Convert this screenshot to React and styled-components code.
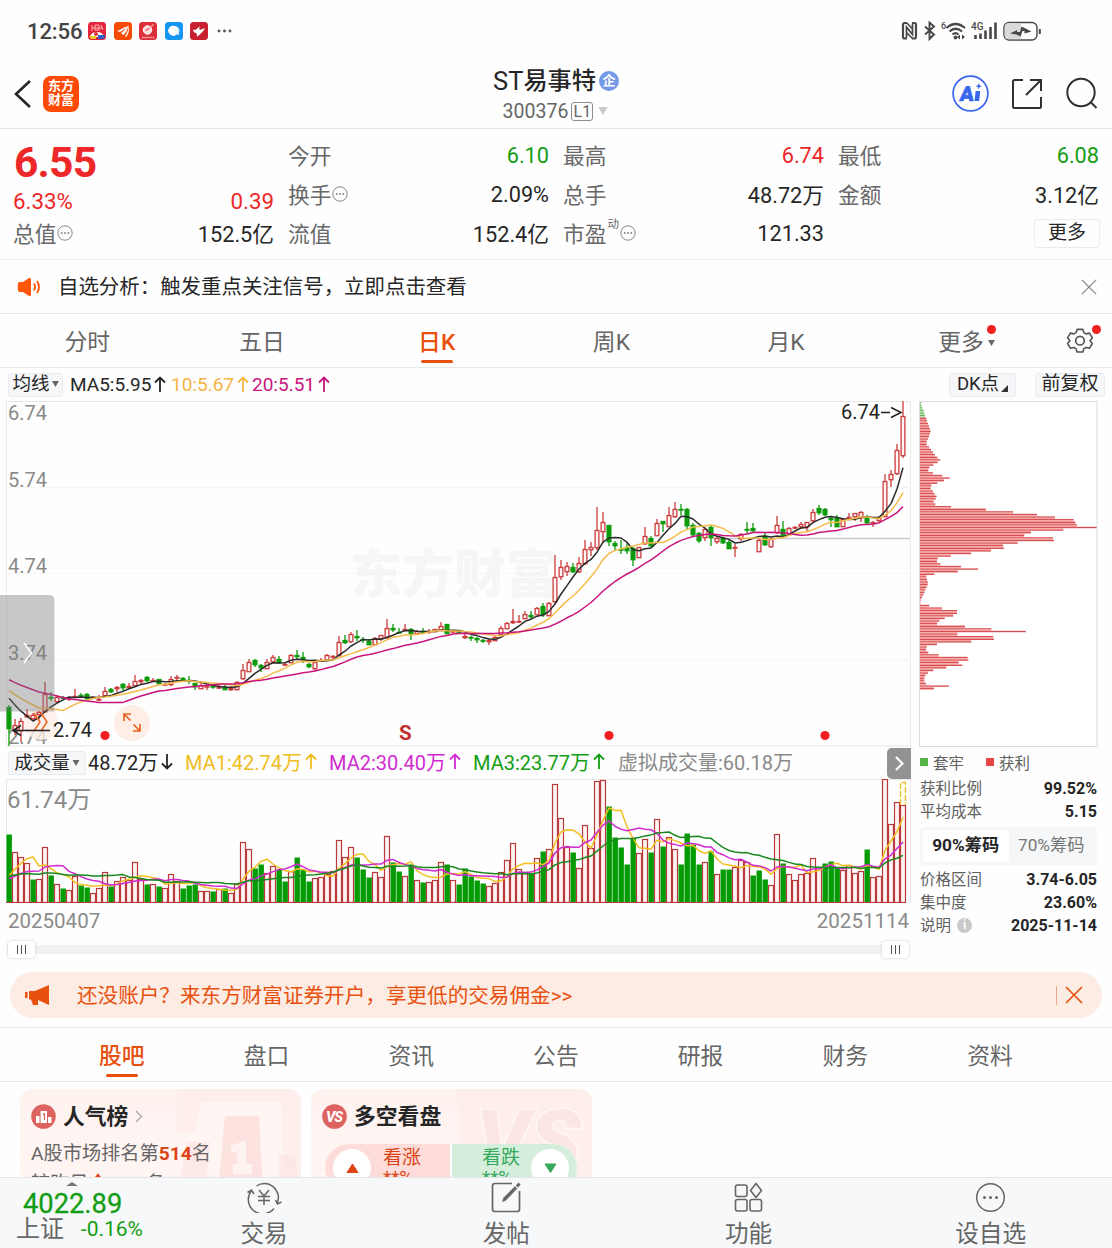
import React from 'react'
import styled, { createGlobalStyle } from 'styled-components'

const GlobalStyle = createGlobalStyle`
  * { box-sizing: border-box; }
  body {
    margin: 0;
    background: #fefefe;
    font-family: Roboto, "Noto Sans CJK SC", sans-serif;
    color: #262626;
    overflow: hidden;
  }
  svg { display: block; flex: none; }
`

const Page = styled.div`
  width: 1112px;
  height: 1248px;
  display: flex;
  flex-direction: column;
  overflow: hidden;
  white-space: nowrap;
`

/* ---------- status bar ---------- */
const StatusBar = styled.div`
  height: 60px;
  flex: none;
  display: flex;
  align-items: center;
  padding: 2px 71px 0 27px;
`
const Clock = styled.span`
  font-size: 22.2px;
  font-weight: 500;
  letter-spacing: -0.2px;
  color: #444;
  width: 61px;
`
const AppDots = styled.div`
  display: flex;
  gap: 7.5px;
  flex: 1;
`
const StatusIcons = styled.div`
  display: flex;
  align-items: center;
`

/* ---------- nav ---------- */
const NavBar = styled.div`
  height: 69px;
  flex: none;
  display: grid;
  grid-template-columns: 300px 1fr 300px;
  border-bottom: 1px solid #e6e6e6;
`
const NavLeft = styled.div`
  display: flex;
  align-items: center;
  padding: 0 0 1px 12px;
  gap: 12px;
`
const Logo = styled.div`
  width: 36px;
  height: 36px;
  border-radius: 8px;
  background: #ff4a05;
  color: #fff;
  font-size: 13px;
  font-weight: 700;
  line-height: 14.5px;
  padding-top: 3px;
  text-align: center;
`
const NavTitle = styled.div`
  display: flex;
  flex-direction: column;
  align-items: center;
  padding-top: 3px;
`
const TitleRow = styled.div`
  display: flex;
  align-items: center;
  height: 35px;
  gap: 3px;
  font-size: 24.2px;
  font-weight: 500;
  line-height: 33px;
  padding-top: 1px;
  span:first-child { font-weight: 400; font-size: 25.5px; margin-right: -3px; }
`
const Corp = styled.span`
  width: 20px;
  height: 20px;
  border-radius: 50%;
  background: #7399e8;
  color: #fff;
  font-size: 13px;
  font-weight: 700;
  line-height: 19px;
  text-align: center;
`
const CodeRow = styled.div`
  display: flex;
  align-items: center;
  height: 26px;
  font-size: 19.5px;
  color: #666;
  gap: 3px;
`
const Level = styled.span`
  border: 1px solid #8c8c8c;
  border-radius: 3px;
  width: 22px;
  height: 19px;
  line-height: 17px;
  text-align: center;
  font-size: 16px;
  margin-right: 1px;
`
const NavRight = styled.div`
  display: flex;
  align-items: center;
  justify-content: flex-end;
  padding: 0 14px 1px 0;
  gap: 22px;
`

/* ---------- quote ---------- */
const Quote = styled.div`
  height: 131px;
  flex: none;
  display: flex;
  border-bottom: 1px solid #efefef;
  padding: 0 13px;
`
const QuoteCol = styled.div`
  width: ${p => p.$w}px;
  margin-right: ${p => p.$gap || 0}px;
  padding-top: 7px;
`
const QuoteRow = styled.div`
  display: flex;
  justify-content: space-between;
  align-items: center;
  height: 39px;
  font-size: 21.7px;
  color: ${p => p.$color || '#262626'};
`
const Price = styled.div`
  height: 50px;
  line-height: 53px;
  padding-left: 1px;
  font-size: 42.5px;
  font-weight: 700;
  letter-spacing: -0.8px;
  color: #ee2728;
`
const PriceRow = styled(QuoteRow)`
  height: ${p => p.$h}px;
  font-size: ${p => p.$size || 21.7}px;
`
const Label = styled.span`
  display: flex;
  align-items: center;
  color: #686868;
  gap: 1px;
  padding-bottom: 3px;
  > svg { margin-top: 1px; }
`
const Val = styled.span`
  color: ${p => p.$color || '#262626'};
  padding-bottom: ${p => (p.$unit ? 3 : 0)}px;
`
const Sup = styled.sup`
  font-size: 11.5px;
  line-height: 14px;
  align-self: flex-start;
`
const MoreButton = styled.span`
  width: 66px;
  height: 29px;
  border: 1px solid #ececec;
  border-radius: 3px;
  line-height: 26px;
  text-align: center;
  font-size: 19px;
  margin: -1px -1px 0 auto;
`

/* ---------- notice ---------- */
const Notice = styled.div`
  height: 54px;
  flex: none;
  display: flex;
  align-items: center;
  padding: 0 15px 0 17px;
  border-bottom: 1px solid #e8e8e8;
  font-size: 20.45px;
`
const NoticeText = styled.span`
  flex: 1;
  padding: 0 0 4px 16px;
`

/* ---------- tabs ---------- */
const Tabs = styled.div`
  height: 54px;
  flex: none;
  display: flex;
  border-bottom: 1px solid #e8e8e8;
`
const SectionTabs = styled(Tabs)`
  height: 55px;
  border-top: 1px solid #e8e8e8;
  padding-left: 49.5px;
`
const Tab = styled.div`
  width: ${p => p.$w}px;
  display: flex;
  flex-direction: column;
  align-items: center;
  font-size: 22.8px;
  line-height: 46px;
  padding-top: 6px;
  color: ${p => (p.$on ? '#e8500e' : '#666')};
  font-weight: ${p => (p.$on ? 500 : 400)};
  &::after {
    content: '';
    width: 32px;
    height: 3px;
    border-radius: 2px;
    margin-top: -6px;
    background: ${p => (p.$on ? '#e8500e' : 'transparent')};
  }
`
const TabMore = styled.span`
  display: flex;
  align-items: center;
  gap: 4px;
  position: relative;
`
const Badge = styled.i`
  position: absolute;
  width: 9px;
  height: 9px;
  border-radius: 50%;
  background: #f0201f;
  right: ${p => p.$right}px;
  top: ${p => p.$top}px;
`
const GearBox = styled.div`
  position: relative;
  padding: 13px 8px 0 7px;
`

/* ---------- chart area ---------- */
const Indicators = styled.div`
  height: 33px;
  flex: none;
  display: flex;
  align-items: center;
  padding: 0 7px 0 8px;
  font-size: 19px;
`
const Chip = styled.span`
  display: flex;
  align-items: center;
  justify-content: center;
  gap: 2px;
  width: ${p => p.$w}px;
  height: 24px;
  border: 1px solid #e9ebee;
  border-radius: 3px;
  background: #f6f7f9;
  color: #262626;
  font-size: ${p => p.$size || 18.5}px;
  line-height: 20px;
  padding-bottom: 1px;
  margin-left: ${p => p.$ml || 0}px;
`
const Ma = styled.span`
  display: flex;
  align-items: center;
  gap: 3px;
  color: ${p => p.$color};
  margin-left: ${p => p.$ml || 0}px;
  padding-bottom: ${p => p.$pb || 0}px;
  width: ${p => p.$w}px;
`
const Spacer = styled.div`
  flex: 1;
`
const ChartArea = styled.div`
  flex: none;
  height: 571px;
  display: flex;
`
const ChartLeft = styled.div`
  width: 912px;
`
const VolumeHead = styled.div`
  height: 32px;
  display: flex;
  align-items: center;
  padding-left: 8px;
  font-size: 20px;
`
const NextButton = styled.div`
  margin: 0 1px 0 auto;
  width: 24px;
  height: 31px;
  border-radius: 5px 0 0 5px;
  background: #929292;
  display: flex;
  align-items: center;
  justify-content: center;
`
const Dates = styled.div`
  height: 36px;
  display: flex;
  justify-content: space-between;
  padding: 0 3px 0 8px;
  font-size: 20.5px;
  line-height: 36px;
  color: #8a8a8a;
`
const Range = styled.div`
  height: 20px;
  margin: 0 3px 0 7px;
  padding: 0 0 0 1px;
  display: flex;
  align-items: center;
  justify-content: space-between;
  background: linear-gradient(#f1f1f3, #f1f1f3) center / 100% 9px no-repeat;
`
const Handle = styled.div`
  width: 27px;
  height: 17px;
  border-radius: 4px;
  background: #fff;
  box-shadow: 0 0 3px #c8c8c8;
  display: flex;
  align-items: center;
  justify-content: center;
  gap: 3px;
  i {
    width: 1px;
    height: 9px;
    background: #555;
  }
`

/* ---------- chips panel ---------- */
const ChipPanel = styled.div`
  width: 185px;
  padding-left: 7px;
`
const Legend = styled.div`
  display: flex;
  align-items: center;
  height: 30px;
  font-size: 15.5px;
  color: #606060;
`
const Square = styled.i`
  width: 8px;
  height: 8px;
  background: ${p => p.$color};
  margin: 0 5px 0 ${p => p.$ml || 1}px;
`
const Stat = styled.div`
  display: flex;
  align-items: center;
  justify-content: space-between;
  height: 23px;
  padding-left: 1px;
  font-size: 15.5px;
  color: #606060;
  span:first-child { padding-bottom: 3px; }
  b {
    font-size: 16px;
    color: #262626;
  }
`
const Segmented = styled.div`
  display: flex;
  height: 38px;
  margin: 4px 0 3px 1px;
  padding: 3px;
  border-radius: 3px;
  background: #f6f7f9;
`
const Segment = styled.span`
  flex: 1;
  border-radius: 3px;
  text-align: center;
  line-height: 30px;
  font-size: 17.3px;
  background: ${p => (p.$on ? '#fff' : 'transparent')};
  font-weight: ${p => (p.$on ? 700 : 400)};
  color: ${p => (p.$on ? '#262626' : '#777')};
`
const Info = styled.span`
  width: 15px;
  height: 15px;
  border-radius: 50%;
  background: #c9c9c9;
  color: #fff;
  font-size: 12px;
  font-weight: 700;
  line-height: 15px;
  text-align: center;
  margin: 0 auto 0 6px;
`

/* ---------- banner ---------- */
const Banner = styled.div`
  flex: none;
  height: 46px;
  margin: 0 10px 9px;
  border-radius: 23px;
  background: #fcece3;
  display: flex;
  align-items: center;
  padding: 0 19px 0 15px;
  color: #e8500e;
  font-size: 20.6px;
`
const BannerText = styled.span`
  flex: 1;
  padding: 0 0 3px 26px;
`
const Divider = styled.i`
  width: 1px;
  height: 19px;
  background: #eaa98c;
  margin-right: 8px;
`

/* ---------- cards ---------- */
const Cards = styled.div`
  flex: none;
  height: 95px;
  overflow: hidden;
  display: flex;
  gap: 10px;
  padding: 7px 0 0 20px;
`
const Card = styled.div`
  position: relative;
  width: 281px;
  height: 140px;
  border-radius: 13px;
  overflow: hidden;
  background: linear-gradient(#fef2ef, #fff8f6);
  padding: 8px 11px;
`
const CardArt = styled.svg`
  position: absolute;
  right: 0;
  top: 0;
`
const CardTitle = styled.div`
  position: relative;
  display: flex;
  align-items: center;
  gap: 7px;
  height: 38px;
  font-size: 21.8px;
  font-weight: 700;
  span { padding-bottom: 3px; }
`
const CardText = styled.div`
  position: relative;
  font-size: 19.2px;
  line-height: 30px;
  padding-top: 4px;
  color: #666;
  b { color: #dc4415; }
`
const Vote = styled.div`
  position: relative;
  display: flex;
  width: 252px;
  height: 48px;
  margin: 9px 0 0 3px;
  border-radius: 24px;
  overflow: hidden;
  background: #fff;
  gap: 2px;
`
const VoteSide = styled.div`
  flex: 1 1 0;
  min-width: 0;
  display: flex;
  flex-direction: ${p => (p.$down ? 'row-reverse' : 'row')};
  align-items: center;
  padding: 0 8px;
  background: ${p => (p.$down ? '#d5eedc' : '#fddcd9')};
  color: ${p => (p.$down ? '#35a95b' : '#dc4415')};
`
const VoteText = styled.div`
  flex: 1;
  align-self: flex-start;
  font-size: 19px;
  line-height: 20px;
  padding: 4px 0 0 ${p => (p.$down ? 22 : 12)}px;
`
const VoteKnob = styled.span`
  flex: none;
  width: 38px;
  height: 38px;
  border-radius: 50%;
  background: #fff;
  display: flex;
  align-items: center;
  justify-content: center;
`

/* ---------- bottom bar ---------- */
const BottomBar = styled.div`
  flex: none;
  height: 71px;
  display: flex;
  border-top: 1px solid #e3e5e8;
  background: #f6f8fa;
`
const IndexBox = styled.div`
  width: 143px;
  padding: 4px 0 0 16px;
  color: #149d14;
  > svg { margin-left: 50px; }
`
const IndexValue = styled.div`
  font-size: 27.3px;
  line-height: 30px;
  padding: 3px 0 0 7px;
  -webkit-text-stroke: 0.3px #149d14;
`
const IndexRow = styled.div`
  display: flex;
  align-items: center;
  justify-content: space-between;
  font-size: 21px;
  line-height: 24px;
  margin-top: -2px;
  span { color: #666; font-size: 24px; }
`
const Action = styled.div`
  width: 242.2px;
  display: flex;
  flex-direction: column;
  align-items: center;
  font-size: 23.6px;
  line-height: 30px;
  color: #666;
  padding-top: 4px;
  gap: 6px;
`

/* ---------- data ---------- */
// per day: up/down, high, body top, body bottom, low, top of the volume bar (chart pixels)
const DAYS = `
G 705 707 729 746 834|R 719 725 731 735 852|R 718 721 731 742 857|R 709 715 717 718 863|G 713 715 719 720 879
R 711 712 715 719 879|R 682 694 712 713 847|G 692 697 698 701 875|R 695 697 702 703 884|G 696 697 698 699 888
R 697 698 699 701 890|R 689 696 697 697 876|G 693 695 696 697 885|G 693 694 699 699 887|R 696 697 698 699 893
R 695 699 700 701 888|R 687 691 696 696 872|G 688 689 692 693 886|R 686 687 689 692 881|R 683 684 688 691 877
R 683 686 688 689 880|R 675 681 686 686 862|R 679 680 682 684 879|G 676 677 681 682 884|R 678 680 681 682 884
G 679 679 684 684 886|R 683 684 685 686 888|R 676 679 685 686 874|R 675 677 678 681 881|G 677 678 681 681 888
G 676 680 681 684 885|G 683 683 687 690 884|R 683 685 689 689 891|R 685 686 687 690 891|G 685 686 687 689 891
R 685 687 688 689 889|G 685 687 690 690 888|R 686 688 690 691 893|R 681 682 690 690 884|R 664 670 679 680 842
R 659 662 672 672 849|G 659 660 665 667 868|G 664 665 668 672 864|R 659 662 669 669 873|R 655 657 662 663 866
G 656 659 663 664 869|G 663 664 665 666 881|R 654 655 663 663 871|G 650 655 657 659 857|G 652 657 660 663 869
G 663 664 667 668 881|R 662 662 669 670 878|R 658 660 661 662 877|R 654 655 660 661 874|R 655 656 657 659 871
R 636 642 656 656 840|R 635 640 643 644 857|R 632 634 642 643 847|G 630 636 638 641 857|G 637 639 640 643 869
G 639 641 645 645 877|R 637 638 645 645 872|R 635 635 639 641 877|R 619 628 638 639 836|G 624 628 630 632 862
G 628 632 632 633 871|R 624 629 630 631 876|G 628 629 634 640 864|R 630 631 634 635 880|G 628 631 632 633 882
R 629 631 632 634 882|R 629 629 632 632 880|R 622 626 631 631 862|G 624 624 634 634 864|R 630 631 632 633 880
G 630 631 633 634 884|G 633 636 638 639 868|G 636 637 638 641 876|G 637 638 640 643 880|G 639 640 641 643 883
R 639 640 642 645 886|R 635 637 641 641 883|R 626 628 635 635 872|R 622 623 629 629 860|R 609 621 623 624 843
R 615 621 622 623 869|R 611 614 619 619 872|G 611 615 617 619 873|R 607 608 615 615 858|G 603 606 615 617 851
R 602 603 616 616 849|R 555 577 602 603 784|R 560 567 577 580 818|R 562 566 572 576 847|G 563 567 572 573 852
R 557 563 572 573 868|R 540 549 564 565 825|R 542 547 550 556 848|R 507 530 548 550 781|R 512 522 532 543 780
G 525 525 542 546 806|G 541 543 546 551 837|G 540 549 550 554 847|G 543 547 551 554 864|G 547 548 560 566 838
R 547 547 558 558 853|R 527 536 544 545 839|G 536 538 546 547 852|R 519 523 536 536 819|G 521 521 524 532 846
R 507 515 527 527 837|R 502 509 517 518 849|G 504 509 510 515 864|G 508 509 526 529 833|G 523 525 535 537 844
G 532 533 541 543 864|R 528 529 538 541 862|G 526 527 538 546 851|R 536 538 542 544 874|G 537 538 543 544 869
G 540 542 549 549 869|R 544 547 548 557 867|R 533 534 539 541 860|R 522 529 530 534 862|G 523 528 531 533 875
G 539 540 552 552 870|G 533 536 545 546 879|R 538 539 547 548 885|R 516 525 533 534 834|G 521 529 536 537 863
R 527 528 534 535 874|R 526 527 528 529 880|R 522 524 527 529 874|R 522 522 527 531 873|R 509 512 521 522 858
R 505 508 513 515 867|G 508 509 515 516 863|G 516 518 520 527 861|G 515 518 527 527 867|R 518 519 527 527 870
R 513 517 518 520 865|R 513 513 517 521 873|R 511 512 518 522 871|G 515 518 523 525 849|R 521 522 523 527 877
R 516 518 521 522 876|R 474 481 517 517 779|R 470 474 480 487 824|R 444 450 474 475 802|R 400 416 456 458 805
`.trim().split(/[|\n]/).map(s => {
  const [kind, ...n] = s.split(' ')
  const [high, top, bottom, low, vol] = n.map(Number)
  return { up: kind === 'R', high, top, bottom, low, vol }
})

// price candles whose colour differs from the volume bar below them
const FLIPPED = [4, 19, 46, 56, 76, 123, 125, 135]
DAYS.forEach((d, i) => { d.candleUp = FLIPPED.includes(i) ? !d.up : d.up })

// levels before the first visible day, so the averages start at the left edge
const repeat = (n, v) => Array(n).fill(v)
const BEFORE_PRICE = [...repeat(10, 669), ...repeat(5, 683), ...repeat(4, 690.5)]
const BEFORE_VOL = [...repeat(10, 873), ...repeat(5, 882), ...repeat(4, 886.5)]

const dayX = i => 9 + i * 6

function average(before, values, n) {
  const all = [...before, ...values]
  return values
    .map((_, i) => {
      const end = i + before.length + 1
      const part = all.slice(end - n, end)
      return `${dayX(i)},${(part.reduce((a, b) => a + b, 0) / n).toFixed(1)}`
    })
    .join(' ')
}

const CLOSES = DAYS.map(d => (d.candleUp ? d.top : d.bottom))
const VOLS = DAYS.map(d => d.vol)

const CHIPS = [
  3, 4, 7, 11, 13, 15, 19, 21, 24, 27, 30, 32, 30, 27, 24, 20, 20, 27, 33, 39, 45, 52, 61, 53, 40, 28, 25, 39, 67, 89,
  72, 52, 34, 32, 39, 44, 50, 47, 41, 46, 93, 198, 279, 351, 405, 461, 466, 471, 530, 430, 333, 313, 399, 402, 293,
  249, 252, 213, 153, 92, 53, 51, 61, 123, 174, 113, 43, 19, 21, 24, 23, 20, 16, 13, 10, 6, 2, 1, 28, 66, 111, 111,
  100, 74, 58, 51, 135, 214, 318, 112, 220, 222, 154, 51, 20, 18, 25, 56, 143, 145, 116, 127, 79, 40, 24, 16, 13, 13,
  18, 86, 42,
].map(v => v / 3)

/* ---------- small drawings ---------- */
const Arrow = ({ down }) => (
  <svg width="12" height="17" viewBox="0 0 12 17" fill="none" stroke="currentColor" strokeWidth="1.8">
    <path d={down ? 'M6 1v14M1 10.500l5 5 5-5' : 'M6 16V2M1 6.500l5-5 5 5'} />
  </svg>
)
const Caret = ({ w = 8, h = 7, color = '#666' }) => (
  <svg width={w} height={h} viewBox="0 0 8 7"><path d="M0 0h8L4 7z" fill={color} /></svg>
)
const Dots = () => (
  <svg width="16" height="16" viewBox="0 0 16 16" fill="#888">
    <circle cx="8" cy="8" r="7.200" fill="none" stroke="#888" />
    <circle cx="4.700" cy="8" r="1" /><circle cx="8" cy="8" r="1" /><circle cx="11.300" cy="8" r="1" />
  </svg>
)
const Cross = ({ size, color, width }) => (
  <svg width={size} height={size} viewBox="0 0 18 18" stroke={color} strokeWidth={width}>
    <path d="M1 1l16 16M17 1L1 17" />
  </svg>
)
const Triangle = ({ down, color }) => (
  <svg width="13" height="10" viewBox="0 0 13 10">
    <path d={down ? 'M1 1h11L6.500 9.500z' : 'M1 9.500h11L6.500 1z'} fill={color} stroke={color} strokeLinejoin="round" />
  </svg>
)

function StatusApps() {
  return (
    <AppDots>
      <svg width="18" height="18" viewBox="0 0 18 18">
        <rect width="18" height="18" rx="3.5" fill="#e3263b" />
        <path d="M4 3v6M7 3h4v5H7zM13 3l2 5M4 6h11" stroke="#ffb3b0" fill="none" />
        <path d="M2 15c1-4 4-5 7-5s6 1 7 5z" fill="#fff" />
        <circle cx="8" cy="12" r="2" fill="#d33" />
        <path d="M1 14h7v3H3z" fill="#f6c62c" /><path d="M10 13h7v2l-2 2h-5z" fill="#2f62c9" />
      </svg>
      <svg width="18" height="18" viewBox="0 0 18 18">
        <rect width="18" height="18" rx="3.5" fill="#f64a06" />
        <path d="M3 9c4-1 6-4 12-5-3 1-6 5-9 6zM7 11c3-1 4-5 8-7-2 3-3 8-6 9zM11 14c2-2 3-6 4-10 0 4 0 8-3 11z" fill="#fff" />
      </svg>
      <svg width="18" height="18" viewBox="0 0 18 18">
        <rect width="18" height="18" rx="3.5" fill="#dd2f38" />
        <circle cx="8.500" cy="8" r="4.200" fill="#ffd9d6" stroke="#fff" />
        <path d="M9 7.500l5.500-5.500M7 9q0-2 2-2" stroke="#dd2f38" fill="none" />
        <path d="M10.500 6l4-3.500" stroke="#fff" />
        <path d="M3 15.500h12" stroke="#f6b2b2" strokeWidth="1.600" strokeDasharray="1.600 .6" />
      </svg>
      <svg width="18" height="18" viewBox="0 0 18 18">
        <rect width="18" height="18" rx="3.5" fill="#1495f2" />
        <path d="M9.500 4a4.800 4.800 0 0 1 4.500 7l.3 2-2.300-.5A5 5 0 1 1 9.500 4z" fill="#cfeaff" />
        <circle cx="8" cy="8.500" r="4.700" fill="#fff" />
      </svg>
      <svg width="18" height="18" viewBox="0 0 18 18">
        <rect width="18" height="18" rx="3.5" fill="#c9202f" />
        <path d="M3 7c1 2 3 1 7-3-1 2-1 3 0 4l5-2c-2 4-5 6-8 9 0-2 0-3-1-4-2 0-3-2-3-4z" fill="#fff" />
      </svg>
      <svg width="18" height="18" viewBox="0 0 18 18" fill="#555">
        <circle cx="3" cy="9" r="1.400" /><circle cx="8.500" cy="9" r="1.400" /><circle cx="14" cy="9" r="1.400" />
      </svg>
    </AppDots>
  )
}

function StatusRight() {
  return (
    <StatusIcons>
      <svg width="140" height="20" viewBox="0 0 140 20" fill="none" stroke="#484848">
        {/* nfc */}
        <path d="M6 2H3.500Q2 2 2 4v11.500q0 2 1.500 2H6M11 2h2.500Q15 2 15 4v11.500q0 2-1.500 2H11" strokeWidth="2.200" />
        <path d="M5.500 17V6l6 7.500V2.500M6 2l5.500 6M5.500 11.500l6 6" strokeWidth="1.700" />
        {/* bluetooth */}
        <path d="M24 5.500l9 8-4.500 4.500V1.500L33 5.500l-9 8" strokeWidth="1.900" />
        {/* wifi */}
        <path d="M45.500 7q9-8 18.500 0M48.500 10.500q6-5.500 12.500 0M51.500 13.500q3-2.700 6 0" strokeWidth="2.200" />
        <circle cx="54.500" cy="16.500" r="2" fill="#484848" stroke="none" />
        <path d="M59 13.500v5l-3-2.500zM61 13.500v5l3-2.500z" fill="#484848" stroke="none" />
        <text x="40" y="8" fontSize="9" fontWeight="500" fill="#484848" stroke="none">6</text>
        {/* signal */}
        <text x="70" y="8.500" fontSize="10" fontWeight="500" fill="#484848" stroke="none" textLength="12.500">4G</text>
        <path d="M74.500 18v-4M79.500 18v-5.500M84.500 18V9.500M89.500 18V6M94.500 18V1.500" strokeWidth="2.600" />
        {/* battery */}
        <rect x="103" y="1.500" width="33" height="17.500" rx="5" fill="#fff" strokeWidth="1.400" />
        <path d="M107 2.200h13v16.100h-13q-3.300 0-3.300-4V6q0-3.800 3.300-3.800z" fill="#d9d9d9" stroke="none" />
        <path d="M109 12.500l7-3.500v2h3l1.500-5.500 10 5-7 2v-2.500h-2l-2 5.500-4-2z" fill="#484848" stroke="none" />
        <path d="M138.800 8v5" strokeWidth="2" />
      </svg>
    </StatusIcons>
  )
}

function NavIcons() {
  return (
    <NavRight>
      <svg width="37" height="37" viewBox="0 0 37 37" fill="#3a66ee">
        <circle cx="18.500" cy="18.500" r="17.400" fill="none" stroke="#3a66ee" strokeWidth="1.700" />
        <text x="10" y="26" fontSize="20.500" fontWeight="900" stroke="#3a66ee" strokeWidth=".7" transform="skewX(-6)">A</text>
        <path d="M23.600 16h4.600l-1 10h-4.600z" />
        <path d="M26.800 8l.9 2.300 2.300.9-2.300.9-.9 2.300-.9-2.300-2.300-.9 2.300-.9z" />
      </svg>
      <svg width="32" height="32" viewBox="0 0 32 32" fill="none" stroke="#303030" strokeWidth="2">
        <path d="M12 2H3.500Q2 2 2 3.500v25Q2 30 3.500 30h25q1.500 0 1.500-1.500V19" />
        <path d="M19 2h11v11M29.500 2.500L15 17" />
      </svg>
      <svg width="33" height="33" viewBox="0 0 33 33" fill="none" stroke="#303030" strokeWidth="2">
        <circle cx="16" cy="15.500" r="13.700" /><path d="M26 25.500l5.500 5.500" />
      </svg>
    </NavRight>
  )
}

function PriceChart() {
  return (
    <svg width="912" height="346" viewBox="0 401 912 346">
      <text x="350" y="593" fontSize="52" fontWeight="900" fill="#f6f6f7">东方财富</text>
      <path d="M6.500 401v345M910.500 401v345" stroke="#ebebeb" />
      <path d="M6 401.500h905M6 746h905" stroke="#e6e6e6" />
      <path d="M7 487.500h903M7 573.500h903M7 660h903" stroke="#f1f1f1" strokeDasharray="5 3" />
      <path d="M713 538.500h197" stroke="#c6cacf" strokeWidth="1.600" />
      <g fontSize="20" fill="#8a8a8a">
        <text x="8" y="420">6.74</text>
        <text x="8" y="487">5.74</text>
        <text x="8" y="573">4.74</text>
        <text x="8" y="660">3.74</text>
        <text x="8" y="744">2.74</text>
      </g>
      <circle cx="41" cy="723" r="17" fill="#fdeee6" fillOpacity=".8" />
      {DAYS.map((d, i) => {
        const x = dayX(i)
        const color = d.candleUp ? '#cc3b3b' : '#0b9b0b'
        return (
          <g key={i} stroke={color} strokeWidth="1.300">
            <path d={`M${x} ${d.high}V${d.top}M${x} ${d.bottom}V${d.low}`} />
            <rect
              x={x - 1.9}
              y={d.top + 0.5}
              width="3.800"
              height={Math.max(d.bottom - d.top - 0.8, 0.6)}
              fill={d.candleUp ? '#fff5f4' : color}
            />
          </g>
        )
      })}
      <g fill="none" strokeWidth="1.500" strokeLinejoin="round">
        <polyline points={average(BEFORE_PRICE, CLOSES, 5)} stroke="#2b2b2b" />
        <polyline points={average(BEFORE_PRICE, CLOSES, 10)} stroke="#f5bb4a" />
        <polyline points={average(BEFORE_PRICE, CLOSES, 20)} stroke="#c8147d" />
      </g>
      <path d="M0 595h49q5.500 0 5.500 5.500V711.500H0z" fill="#787878" fillOpacity=".4" />
      <path d="M24 643l7.500 10-7.500 10" fill="none" stroke="#fff" strokeWidth="1.600" />
      <path d="M34 713l6 9-6 9M41 713l6 9-6 9" fill="none" stroke="#ef6a26" strokeWidth="1.600" />
      <path d="M50 730.500H13M21 725.500l-8 5 8 5" fill="none" stroke="#222" strokeWidth="1.500" />
      <text x="53" y="737" fontSize="20" fill="#222">2.74</text>
      <text x="841" y="419" fontSize="20" fill="#222">6.74</text>
      <path d="M881 412.500h9M891 407.500l10 5-10 5" fill="none" stroke="#222" strokeWidth="1.500" />
      <circle cx="132" cy="723" r="18" fill="#feeee6" />
      <path d="M124 721v-7h7M124.500 714.500l6 6M140 724v7h-7M139.500 730.500l-6-6" fill="none" stroke="#e8631f" strokeWidth="1.700" />
      <g fill="#f0201f">
        <circle cx="105" cy="735.500" r="4.600" />
        <circle cx="609" cy="735.500" r="4.600" />
        <circle cx="825" cy="735.500" r="4.600" />
      </g>
      <text x="399" y="740" fontSize="20.500" fontWeight="700" fill="#c22f2f">S</text>
    </svg>
  )
}

function VolumeChart() {
  return (
    <svg width="912" height="124" viewBox="0 779 912 124">
      <path d="M6 779.500h905M6.500 779v124M910.500 779v124" stroke="#e8e8e8" />
      <text x="7" y="808" fontSize="24" fill="#8a8a8a">61.74万</text>
      {DAYS.map((d, i) => (
        <rect
          key={i}
          x={dayX(i) - 2.5}
          y={d.vol + 0.5}
          width={d.up ? 5 : 5.4}
          height={902 - d.vol}
          fill={d.up ? '#fff4f3' : '#049c04'}
          stroke={d.up ? '#b83a3a' : 'none'}
          strokeWidth="1.200"
        />
      ))}
      <path d="M6 902.500h900" stroke="#b83a3a" />
      <path d="M900.500 805v-22.500h5V805" fill="#fffbe8" stroke="#e8bd2c" strokeWidth="1.300" strokeDasharray="6 2" />
      <g fill="none" strokeWidth="1.500" strokeLinejoin="round">
        <polyline points={average(BEFORE_VOL, VOLS, 5)} stroke="#f2c021" />
        <polyline points={average(BEFORE_VOL, VOLS, 10)} stroke="#d22bd2" />
        <polyline points={average(BEFORE_VOL, VOLS, 20)} stroke="#19881f" />
      </g>
    </svg>
  )
}

function ChipChart() {
  return (
    <svg width="179" height="346" viewBox="0 0 179 346">
      <rect x=".5" y=".5" width="177.500" height="345" fill="#fff" stroke="#dcdcdc" />
      {CHIPS.map((w, k) => {
        const y = 1 + k * 2.6
        const next = Math.min(w, CHIPS[k + 1] || 0)
        return (
          <g key={k}>
            <rect x="1" y={y} width={w} height="1.400" fill={k < 6 ? '#69b85c' : '#d75254'} />
            <rect x="1" y={y + 1.4} width={next} height="1.200" fill={k < 6 ? '#b4ddb0' : '#fba3a3'} />
          </g>
        )
      })}
    </svg>
  )
}

const PERIODS = ['分时', '五日', '日K', '周K', '月K']
const SECTIONS = ['股吧', '盘口', '资讯', '公告', '研报', '财务', '资料']

export default function App() {
  return (
    <Page>
      <GlobalStyle />
      <StatusBar>
        <Clock>12:56</Clock>
        <StatusApps />
        <StatusRight />
      </StatusBar>

      <NavBar>
        <NavLeft>
          <svg width="19" height="28" viewBox="0 0 19 28" fill="none" stroke="#262626" strokeWidth="2.600">
            <path d="M18 1L4 14l14 13" />
          </svg>
          <Logo>东方<br />财富</Logo>
        </NavLeft>
        <NavTitle>
          <TitleRow><span>ST</span>易事特<Corp>企</Corp></TitleRow>
          <CodeRow>300376<Level>L1</Level><Caret w={12} h={8} color="#c8c8c8" /></CodeRow>
        </NavTitle>
        <NavIcons />
      </NavBar>

      <Quote>
        <QuoteCol $w={261} $gap={14}>
          <Price>6.55</Price>
          <PriceRow $h={30} $size={22.3} $color="#ee2728"><span>6.33%</span><span>0.39</span></PriceRow>
          <PriceRow $h={36}><Label>总值<Dots /></Label><Val $unit>152.5亿</Val></PriceRow>
        </QuoteCol>
        <QuoteCol $w={261} $gap={14}>
          <QuoteRow><Label>今开</Label><Val $color="#149d14">6.10</Val></QuoteRow>
          <QuoteRow><Label>换手<Dots /></Label><Val>2.09%</Val></QuoteRow>
          <QuoteRow><Label>流值</Label><Val $unit>152.4亿</Val></QuoteRow>
        </QuoteCol>
        <QuoteCol $w={261} $gap={14}>
          <QuoteRow><Label>最高</Label><Val $color="#ee2728">6.74</Val></QuoteRow>
          <QuoteRow><Label>总手</Label><Val $unit>48.72万</Val></QuoteRow>
          <QuoteRow><Label>市盈<Sup>动</Sup><Dots /></Label><Val>121.33</Val></QuoteRow>
        </QuoteCol>
        <QuoteCol $w={261}>
          <QuoteRow><Label>最低</Label><Val $color="#149d14">6.08</Val></QuoteRow>
          <QuoteRow><Label>金额</Label><Val $unit>3.12亿</Val></QuoteRow>
          <QuoteRow><MoreButton>更多</MoreButton></QuoteRow>
        </QuoteCol>
      </Quote>

      <Notice>
        <svg width="25" height="20" viewBox="0 0 25 20">
          <path d="M1 6Q.5 10 1 14l1.500 1H6l6 4q1.800.5 2-1V2q-.2-1.500-2-1L6 5H2.500z" fill="#ff5608" />
          <path d="M17 6.500q2 3.500 0 7M20 4q4 6 0 12" fill="none" stroke="#ff5608" strokeWidth="1.900" />
        </svg>
        <NoticeText>自选分析：触发重点关注信号，立即点击查看</NoticeText>
        <Cross size={16} color="#8a8a8a" width={1.5} />
      </Notice>

      <Tabs>
        {PERIODS.map(t => <Tab key={t} $w={174.7} $on={t === '日K'}>{t}</Tab>)}
        <Tab $w={186}>
          <TabMore>更多<Caret w={7} h={6} /><Badge $right={-1} $top={5} /></TabMore>
        </Tab>
        <GearBox>
          <svg width="28" height="28" viewBox="0 0 28 28" fill="none" stroke="#555" strokeWidth="1.700" strokeLinejoin="round">
            <path d="M11 2h6l1.200 3.500 2.300 1.300 3.700-.8 3 5-2.500 3 2.500 3-3 5-3.700-.8-2.300 1.300L17 26h-6l-1.200-3.500-2.300-1.300-3.700.8-3-5 2.500-3-2.500-3 3-5 3.700.8 2.300-1.300z" transform="translate(.8 .5) scale(.94)" />
            <circle cx="14" cy="13.700" r="4.300" />
          </svg>
          <Badge $right={1} $top={11} />
        </GearBox>
      </Tabs>

      <Indicators>
        <Chip $w={55}>均线<Caret w={7} h={6} /></Chip>
        <Ma $ml={7} $w={101}>MA5:5.95<Arrow /></Ma>
        <Ma $w={81} $color="#f5b544">10:5.67<Arrow /></Ma>
        <Ma $w={90} $color="#c8147d">20:5.51<Arrow /></Ma>
        <Spacer />
        <Chip $w={67}>DK点
          <svg width="7" height="16" viewBox="0 0 7 16"><path d="M7 9v7H0z" fill="#333" /></svg>
        </Chip>
        <Chip $w={70} $ml={19} $size={19}>前复权</Chip>
      </Indicators>

      <ChartArea>
        <ChartLeft>
          <PriceChart />
          <VolumeHead>
            <Chip $w={78}>成交量<Caret w={8} h={6} /></Chip>
            <Ma $ml={2} $pb={3} $w={97}>48.72万<Arrow down /></Ma>
            <Ma $pb={3} $w={144} $color="#f0bd1e">MA1:42.74万<Arrow /></Ma>
            <Ma $pb={3} $w={144} $color="#d22bd2">MA2:30.40万<Arrow /></Ma>
            <Ma $pb={3} $w={145} $color="#149d14">MA3:23.77万<Arrow /></Ma>
            <Ma $pb={3} $w={180} $color="#8a8a8a">虚拟成交量:60.18万</Ma>
            <NextButton>
              <svg width="9" height="15" viewBox="0 0 9 15" fill="none" stroke="#fff" strokeWidth="2.200"><path d="M1 1l6.500 6.500L1 14" /></svg>
            </NextButton>
          </VolumeHead>
          <VolumeChart />
          <Dates><span>20250407</span><span>20251114</span></Dates>
          <Range>
            <Handle><i /><i /><i /></Handle>
            <Handle><i /><i /><i /></Handle>
          </Range>
        </ChartLeft>
        <ChipPanel>
          <ChipChart />
          <Legend><Square $color="#55b348" />套牢<Square $ml={22} $color="#e64545" />获利</Legend>
          <Stat><span>获利比例</span><b>99.52%</b></Stat>
          <Stat><span>平均成本</span><b>5.15</b></Stat>
          <Segmented><Segment $on>90%筹码</Segment><Segment>70%筹码</Segment></Segmented>
          <Stat><span>价格区间</span><b>3.74-6.05</b></Stat>
          <Stat><span>集中度</span><b>23.60%</b></Stat>
          <Stat><span>说明</span><Info>i</Info><b>2025-11-14</b></Stat>
        </ChipPanel>
      </ChartArea>

      <Banner>
        <svg width="26" height="22" viewBox="0 0 26 22" fill="#e8500e">
          <path d="M0 8h2.500v6H0zM4 7h6L24 1v20L13 16v5H8l-2-5.500H4z" />
        </svg>
        <BannerText>还没账户？来东方财富证券开户，享更低的交易佣金&gt;&gt;</BannerText>
        <Divider />
        <Cross size={18} color="#e8500e" width={1.7} />
      </Banner>

      <SectionTabs>
        {SECTIONS.map(t => <Tab key={t} $w={144.7} $on={t === '股吧'}>{t}</Tab>)}
      </SectionTabs>

      <Cards>
        <Card>
          <CardArt width="150" height="100" viewBox="0 0 150 100">
            <path d="M26 0h124v100H26z" fill="#fdeae7" opacity=".5" />
            <path d="M0 43h44l6-30h80l4 87H0z" fill="#fff6f4" opacity=".8" />
            <path d="M74 27h34l4 73H67z" fill="#fbdedb" opacity=".8" />
            <path d="M35 53h24l-4 47H28zM128 66h16l4 34h-19z" fill="#fce4e1" opacity=".7" />
            <path d="M80 57l15-6v24h6v10H82V75h4V63h-6z" fill="#fff3f1" />
          </CardArt>
          <CardTitle>
            <svg width="25" height="25" viewBox="0 0 25 25">
              <circle cx="12.500" cy="12.500" r="12.300" fill="#dc6360" />
              <path d="M5 12h3.500v7H5zM9.500 7H16v12H9.500zM17 13h3.500v6H17z" fill="#fff" />
              <path d="M12 10h1.500v6" stroke="#dc6360" fill="none" strokeWidth="1.300" />
            </svg>
            <span>人气榜</span>
            <svg width="8" height="13" viewBox="0 0 8 13" fill="none" stroke="#aaa" strokeWidth="1.400"><path d="M1 1l5.500 5.500L1 12" /></svg>
          </CardTitle>
          <CardText>A股市场排名第<b>514</b>名<br />较昨日<b>↑839</b> 名</CardText>
        </Card>
        <Card>
          <CardArt width="140" height="100" viewBox="0 0 140 100">
            <path d="M4 0h136v100H14z" fill="#fdeae7" opacity=".5" />
            <text x="24" y="80" fontSize="84" fontWeight="900" fontStyle="italic" fill="#fce6e3" stroke="#fff5f3" strokeWidth="4" paintOrder="stroke">VS</text>
          </CardArt>
          <CardTitle>
            <svg width="25" height="25" viewBox="0 0 25 25">
              <circle cx="12.500" cy="12.500" r="12.300" fill="#dc6360" />
              <text x="4" y="18" fontSize="14.500" fontWeight="800" fontStyle="italic" fill="#fff" textLength="17">VS</text>
            </svg>
            <span>多空看盘</span>
          </CardTitle>
          <Vote>
            <VoteSide>
              <VoteKnob><Triangle color="#dc4415" /></VoteKnob>
              <VoteText>看涨<br />**%</VoteText>
            </VoteSide>
            <VoteSide $down>
              <VoteKnob><Triangle down color="#35a95b" /></VoteKnob>
              <VoteText $down>看跌<br />**%</VoteText>
            </VoteSide>
          </Vote>
        </Card>
      </Cards>

      <BottomBar>
        <IndexBox>
          <svg width="12" height="4" viewBox="0 0 12 4"><path d="M0 4l6-4 6 4z" fill="#777" /></svg>
          <IndexValue>4022.89</IndexValue>
          <IndexRow><span>上证</span>-0.16%</IndexRow>
        </IndexBox>
        <Action>
          <svg width="36" height="31" viewBox="0 0 36 31" fill="none" stroke="#666" strokeWidth="1.500">
            <path d="M10.500 4A14 14 0 0 1 31.500 20.500M28 26.500A14 14 0 0 1 5.500 8.500M1.500 10.500L5.500 8l2.500 4M35.500 20l-4 2-2-4" />
            <path d="M13 8l5 6 5-6M12 14.500h12M12 18.500h12M18 14v9" />
          </svg>
          交易
        </Action>
        <Action>
          <svg width="31" height="31" viewBox="0 0 31 31" fill="none" stroke="#666" strokeWidth="1.700">
            <path d="M21 1.500H4Q1.500 1.500 1.500 4v23q0 2.500 2.500 2.500h22q2.500 0 2.500-2.500V9" />
            <path d="M11.500 19.500l1-3.500L24 4.500l2 2-11.500 12z" fill="#666" strokeWidth=".6" />
            <path d="M26 4.500l2.500-3" strokeWidth="2.800" />
          </svg>
          发帖
        </Action>
        <Action>
          <svg width="29" height="31" viewBox="0 0 29 31" fill="none" stroke="#666" strokeWidth="1.600">
            <rect x="1.500" y="3" width="11.500" height="11.500" rx="2" />
            <path d="M22 1.500l5.500 7L22 15.500l-5.500-7z" strokeLinejoin="round" />
            <rect x="1.500" y="17.500" width="11.500" height="11.500" rx="2" />
            <rect x="16" y="17.500" width="11.500" height="11.500" rx="2" />
          </svg>
          功能
        </Action>
        <Action>
          <svg width="31" height="31" viewBox="0 0 31 31" fill="#666">
            <circle cx="15.500" cy="15.500" r="13.800" fill="none" stroke="#666" strokeWidth="1.500" />
            <circle cx="9.500" cy="15.500" r="1.500" /><circle cx="15.500" cy="15.500" r="1.500" /><circle cx="21.500" cy="15.500" r="1.500" />
          </svg>
          设自选
        </Action>
      </BottomBar>
    </Page>
  )
}
